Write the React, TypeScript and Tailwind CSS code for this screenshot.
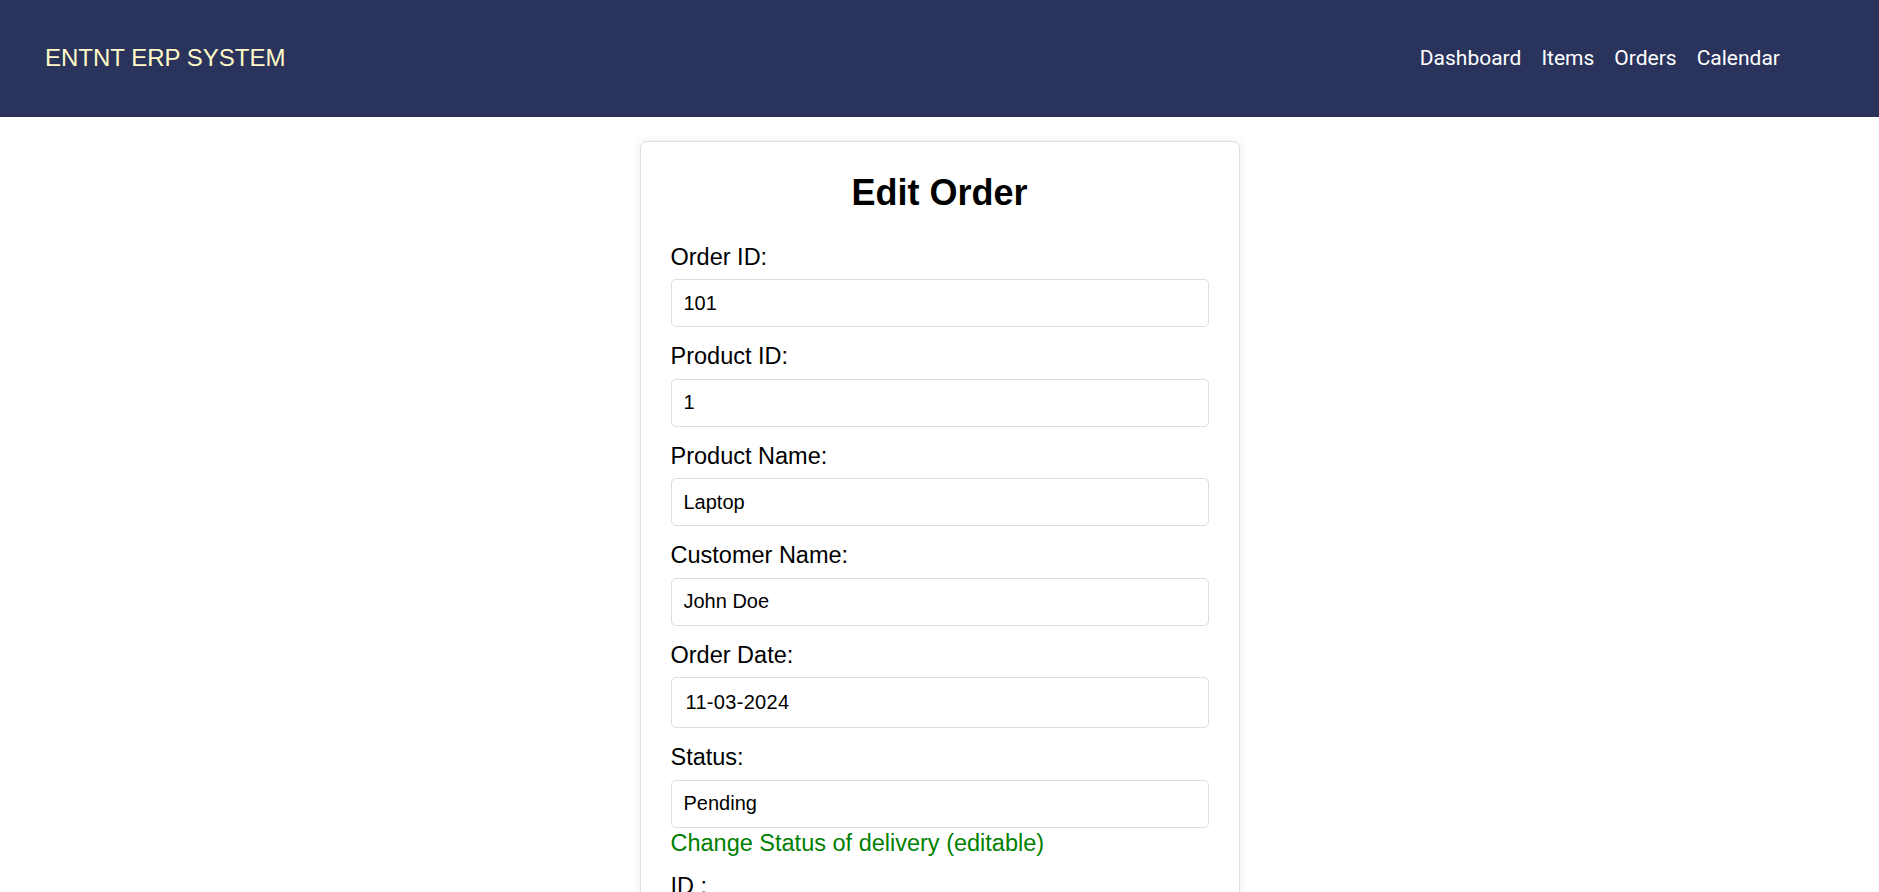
import React from 'react'

const fields = [
  { label: 'Order ID:', value: '101' },
  { label: 'Product ID:', value: '1' },
  { label: 'Product Name:', value: 'Laptop' },
  { label: 'Customer Name:', value: 'John Doe' },
]

function Field({ label, value, tall }: { label: string; value: string; tall?: boolean }) {
  return (
    <div className="mb-4">
      <label className="block mb-2 text-[23.5px] leading-[27.5px]">{label}</label>
      <input
        readOnly
        value={value}
        className={`block w-full ${tall ? 'h-[51px] pl-[14px] tracking-[0.3px]' : 'h-[48px] pl-[12px]'} rounded-[5px] border border-[#dddddd] bg-white text-[20px] text-black outline-none`}
      />
    </div>
  )
}

export default function App() {
  return (
    <div className="min-h-screen bg-white text-black" style={{ fontFamily: '"Liberation Sans", Arial, sans-serif' }}>
      <header className="h-[117px] bg-[#2a335c] flex items-center justify-between pl-[45px] pr-[99px]">
        <div className="text-[24px] leading-none text-[#fffac8] pb-[1px]">ENTNT ERP SYSTEM</div>
        <nav className="flex gap-[20px] text-[21px] text-white" style={{ fontFamily: 'Roboto, sans-serif' }}>
          <a href="#">Dashboard</a>
          <a href="#">Items</a>
          <a href="#">Orders</a>
          <a href="#">Calendar</a>
        </nav>
      </header>

      <main className="flex justify-center pt-[24px] pb-10">
        <div className="w-[600px] rounded-[7px] border border-[#dddddd] bg-white p-[30px] shadow-[0_0_10px_rgba(0,0,0,0.08)]">
          <h2 className="text-center text-[36px] font-bold leading-[41px] mb-[30.5px]">Edit Order</h2>

          {fields.map((f) => (
            <Field key={f.label} label={f.label} value={f.value} />
          ))}
          <Field label="Order Date:" value="11-03-2024" tall />

          <div className="mb-4">
            <label className="block mb-2 text-[23.5px] leading-[27.5px]">Status:</label>
            <input
              readOnly
              value="Pending"
              className="block w-full h-[48px] pl-[12px] rounded-[5px] border border-[#dddddd] bg-white text-[20px] text-black outline-none"
            />
            <p className="mt-[1px] text-[23.5px] leading-[28px] text-[#008000]">Change Status of delivery (editable)</p>
          </div>

          <Field label="ID :" value="1" />

          <button className="w-full h-[48px] rounded-[5px] bg-[#2a335c] text-white text-[20px]">Update Order</button>
        </div>
      </main>
    </div>
  )
}
